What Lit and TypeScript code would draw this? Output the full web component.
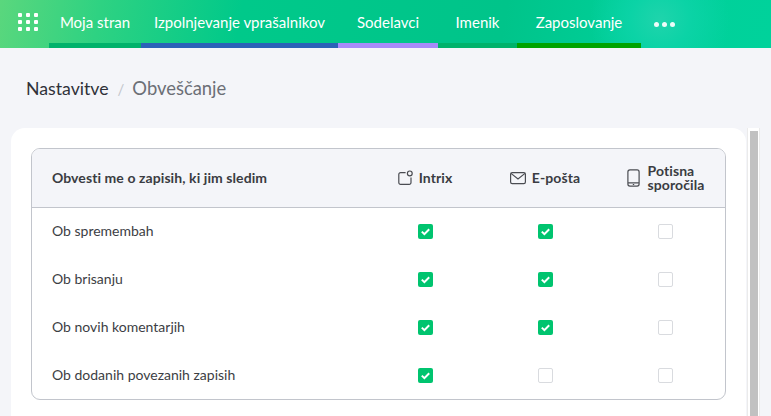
import { LitElement, html, css, svg } from "lit";
import { customElement } from "lit/decorators.js";

const NAV = [
  { t: "Moja stran", w: 92, c: "#00b26b" },
  { t: "Izpolnjevanje vprašalnikov", w: 197, c: "#2b62b8" },
  { t: "Sodelavci", w: 100, c: "#a78bfa" },
  { t: "Imenik", w: 79, c: "#00b26b" },
  { t: "Zaposlovanje", w: 124, c: "#00a300" },
];
const ROWS: [string, boolean, boolean, boolean][] = [
  ["Ob spremembah", true, true, false],
  ["Ob brisanju", true, true, false],
  ["Ob novih komentarjih", true, true, false],
  ["Ob dodanih povezanih zapisih", true, false, false],
];

@customElement("app-root")
export class AppRoot extends LitElement {
  static styles = css`
    :host { display: block; width: 771px; height: 416px; overflow: hidden; background: #f4f5f9; font-family: "Lato", "Open Sans", sans-serif; color: #333; position: relative; }
    .nav { height: 48px; display: flex; background: radial-gradient(circle at 660px 20px, #1fd4ac 0, #0bd3a6 30px, rgba(0,208,150,0) 70px), linear-gradient(100deg, #5ad77d 0, #2ed282 100px, #00c98a 240px, #00c48a 500px, #00d09a 640px, #00d29b 771px); }
    .apps { width: 49px; box-sizing: border-box; padding: 13px 0 0 18px; }
    .dots { display: grid; grid-template-columns: repeat(3, 4px); grid-auto-rows: 4px; gap: 3px 4px; }
    .dots i { background: #fff; border-radius: 1px; }
    .item { box-sizing: border-box; height: 48px; padding-top: 13px; text-align: center; color: #fff; font-size: 15px; line-height: 18px; border-bottom: 5px solid; white-space: nowrap; }
    .more { display: flex; gap: 3px; padding: 22px 0 0 13px; }
    .more i { width: 5px; height: 5px; border-radius: 50%; background: #fff; opacity: .92; }
    .crumbs { display: flex; align-items: baseline; height: 80px; box-sizing: border-box; padding: 29px 0 0 26px; line-height: 22px; }
    .crumbs b { font-weight: 400; font-size: 17.7px; color: #2f3138; }
    .crumbs i { font-style: normal; color: #c3c6cc; margin: 0 9px; font-size: 15px; }
    .crumbs span { color: #6c6f76; font-size: 18.4px; margin-left: -1px; }
    .card { width: 735px; margin-left: 11px; height: 300px; box-sizing: border-box; background: #fff; border-radius: 14px 14px 0 0; padding: 20px 20px 0; }
    .scroll { position: absolute; left: 747px; top: 128px; width: 13px; height: 288px; box-sizing: border-box; border-left: 1px solid #ebebeb; border-right: 1px solid #ebebeb; background: #fff; padding: 3px 0 0 2px; }
    .scroll i { display: block; width: 8px; height: 100%; background: #c1c1c1; }
    .table { width: 695px; height: 252px; box-sizing: border-box; border: 1px solid #c2c5cc; border-radius: 9px; overflow: hidden; }
    .head { display: grid; grid-template-columns: 333px 120px 120px 120px; height: 59px; box-sizing: border-box; background: #f4f5f9; border-bottom: 1px solid #c2c5cc; align-items: center; font-size: 14px; letter-spacing: .08px; font-weight: 700; color: #3a3c42; }
    .head .first { padding: 0 0 2px 20px; }
    .col { display: flex; align-items: center; justify-content: center; gap: 6px; line-height: 14px; }
    .col svg { flex: none; }
    .col.wide { gap: 8px; padding-left: 1px; }
    .row { display: grid; grid-template-columns: 333px 120px 120px 120px; height: 48px; align-items: center; font-size: 14px; color: #3c3e44; }
    .row .first { padding: 0 0 2px 20px; }
    .rows { margin-top: -1px; }
    .cell { display: flex; justify-content: center; }
    .cb { width: 15px; height: 15px; box-sizing: border-box; border: 1px solid #d9dbdf; border-radius: 2px; background: #fff; display: block; }
    .cb.on { border: 0; background: #00c46f; }
    .cb svg { display: block; }
  `;

  private cb(on: boolean) {
    return on
      ? html`<span class="cb on"><svg width="15" height="15" viewBox="0 0 15 15"><path d="M3.8 7.6l2.6 2.5 4.8-4.8" fill="none" stroke="#fff" stroke-width="2"/></svg></span>`
      : html`<span class="cb"></span>`;
  }

  render() {
    return html`
      <div class="nav">
        <div class="apps"><div class="dots">${Array.from({ length: 9 }, () => html`<i></i>`)}</div></div>
        ${NAV.map((n) => html`<div class="item" style="width:${n.w}px;border-color:${n.c}">${n.t}</div>`)}
        <div class="more"><i></i><i></i><i></i></div>
      </div>
      <div class="crumbs"><b>Nastavitve</b><i>/</i><span>Obveščanje</span></div>
      <div class="card">
        <div class="table">
          <div class="head">
            <div class="first">Obvesti me o zapisih, ki jim sledim</div>
            <div class="col">
              <svg width="15" height="16" viewBox="0 0 15 16" fill="none" stroke="#4a4c52" stroke-width="1.2">
                ${svg`<path d="M7.6 2.6H2.6A1.8 1.8 0 0 0 .8 4.4v8.2a1.8 1.8 0 0 0 1.8 1.8h8.6a1.8 1.8 0 0 0 1.8-1.8V7.5"/><circle cx="11.8" cy="3.4" r="2.4"/>`}
              </svg>
              Intrix
            </div>
            <div class="col">
              <svg width="16" height="14" viewBox="0 0 16 14" fill="none" stroke="#4a4c52" stroke-width="1.2">
                ${svg`<rect x=".6" y="1.6" width="14.8" height="11" rx="1.6"/><path d="M1 2.4l7 5.6 7-5.6"/>`}
              </svg>
              E-pošta
            </div>
            <div class="col wide">
              <svg width="13" height="18" viewBox="0 0 13 18" fill="none" stroke="#4a4c52" stroke-width="1.2">
                ${svg`<rect x=".9" y=".9" width="11.2" height="16.2" rx="2"/><path d="M1 13.8h11"/><path d="M5.8 15.5h1.4"/>`}
              </svg>
              <div>Potisna<br />sporočila</div>
            </div>
          </div>
          <div class="rows">
          ${ROWS.map((r) => html`
            <div class="row">
              <div class="first">${r[0]}</div>
              <div class="cell">${this.cb(r[1])}</div>
              <div class="cell">${this.cb(r[2])}</div>
              <div class="cell">${this.cb(r[3])}</div>
            </div>`)}
          </div>
        </div>
      </div>
      <div class="scroll"><i></i></div>
    `;
  }
}
